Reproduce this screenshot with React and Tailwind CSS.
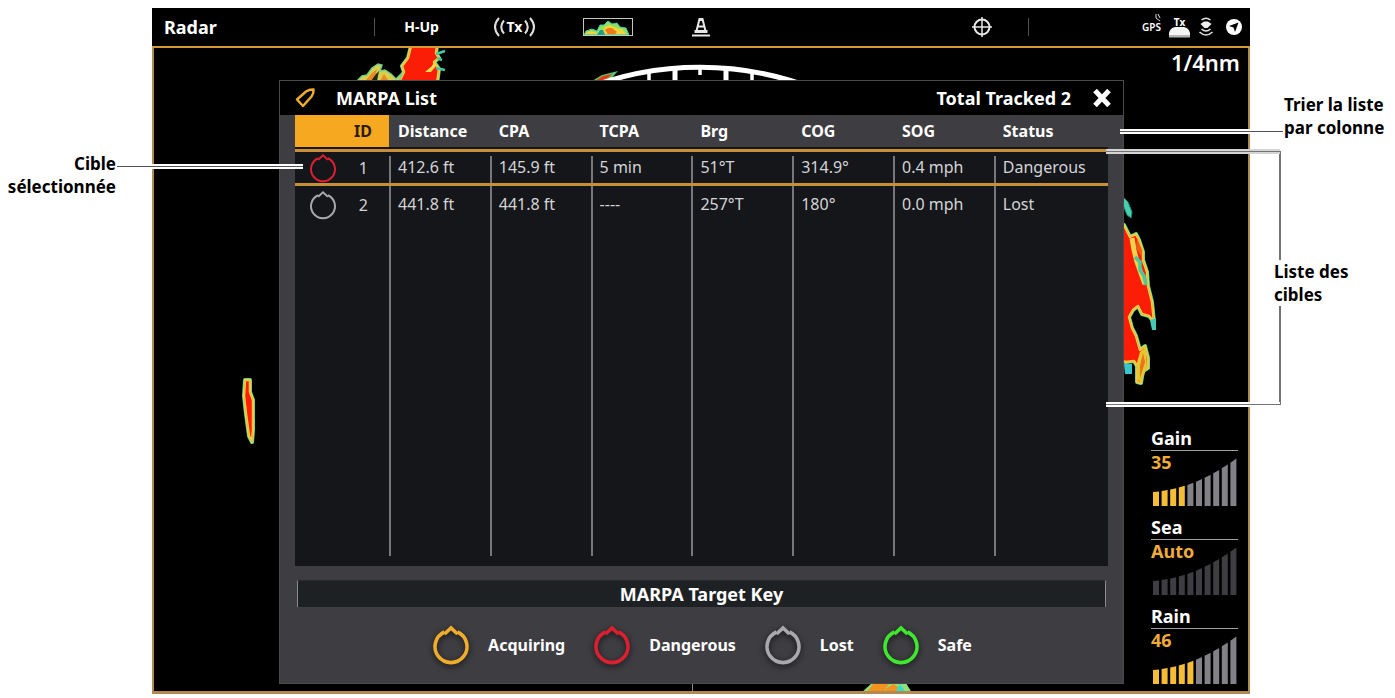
import React, { useState } from 'react';
import clsx from 'clsx';

const TARGETS = [
    { id: 1, status: 'Dangerous', distance: '412.6 ft', cpa: '145.9 ft', tcpa: '5 min', brg: '51°T', cog: '314.9°', sog: '0.4 mph' },
    { id: 2, status: 'Lost', distance: '441.8 ft', cpa: '441.8 ft', tcpa: '----', brg: '257°T', cog: '180°', sog: '0.0 mph' },
];

const COLUMNS = [
    { key: 'distance', label: 'Distance' },
    { key: 'cpa', label: 'CPA' },
    { key: 'tcpa', label: 'TCPA' },
    { key: 'brg', label: 'Brg' },
    { key: 'cog', label: 'COG' },
    { key: 'sog', label: 'SOG' },
    { key: 'status', label: 'Status' },
];

const KEY_ITEMS = ['Acquiring', 'Dangerous', 'Lost', 'Safe'];

const RING_COLORS = {
    Acquiring: '#f0ad2b',
    Dangerous: '#dc2030',
    Lost: '#a9a9ad',
    Safe: '#3fe82f',
};

const GAUGES = [
    { label: 'Gain', value: '35', lit: 4 },
    { label: 'Sea', value: 'Auto', lit: 0, auto: true },
    { label: 'Rain', value: '46', lit: 5 },
];

const TargetRing = ({ status, className, strokeWidth }) => (
    <svg viewBox="0 0 40 40" className={className} fill="none" stroke={RING_COLORS[status]} strokeWidth={strokeWidth} aria-hidden="true">
        <path d="M26.500 7A16 16 0 1 1 13.500 7" />
        <path d="M13.500 9L20 3L26.500 9" />
    </svg>
);

// Radar echoes: cold outer edge, hot core, warm rim between them
const Echo = ({ d }) => (
    <g strokeLinejoin="round">
        <path d={d} fill="#35c9b0" stroke="#4fcf9c" strokeWidth="4" />
        <path d={d} fill="#fb1d06" stroke="#f0dc4a" strokeWidth="2.500" />
        <path d={d} fill="none" stroke="#f0a030" strokeWidth="0.700" />
    </g>
);

const RadarScope = () => (
    <svg className="absolute inset-0 h-full w-full" viewBox="154 48 1094 643" preserveAspectRatio="xMidYMid slice" aria-hidden="true">
        <Echo d="M411 46L437 46L436 53L439 58L434 62L439 69L437 84L398 84L404 72L402 66L408 58Z" />
        <path d="M357 81L362 76L367 75L372 68L378 64L382 65L380 71L385 70L391 74L396 79L402 73L399 82Z" fill="#d8cf4a" stroke="#6fcf8e" strokeWidth="1.500" />
        <path d="M366 80L372 73L377 69L374 80ZM380 81L384 74L388 80Z" fill="#f0871f" />
        <path d="M371 81L376 74L379 71L377 81Z" fill="#1c2a1c" />
        <path d="M425 72L432 66L434 62L436 66L431 72Z" fill="#f0dc4a" />
        <path d="M436 54L445 51M437 58L442 60M436 68L445 70" stroke="#45c9a0" strokeWidth="2.500" />
        <path d="M592 81L602 75L618 71L609 81Z" fill="#62c16a" />
        <path d="M595 81L603 76L612 74L605 81Z" fill="#e03a12" />
        <path d="M580 91A316 316 0 0 1 820 91" fill="none" stroke="#fff" strokeWidth="5" />
        <path d="M649 72V84M700 66V75M752 72V84" stroke="#fff" strokeWidth="3.500" />
        <path d="M675 68V84M726 68V84" stroke="#fff" strokeWidth="5" />
        <path d="M1123 197L1128 202L1132 212L1131 218L1127 215L1123 205Z" fill="#45d0b0" stroke="#1e8a78" />
        <Echo d="M1118 223L1124 225L1130 237L1136 234L1139 240L1143 252L1143 260L1147 272L1148 286L1152 302L1154 322L1149 316L1142 314L1138 306L1133 310L1129 317L1132 328L1136 336L1140 350L1145 346L1148 358L1148 368L1143 371L1141 383L1137 382L1137 366L1134 361L1126 362L1118 360Z" />
        <path d="M1132 238L1134 250L1137 262L1142 276L1145 284" fill="none" stroke="#eed34a" strokeWidth="5" strokeLinejoin="round" />
        <path d="M1135 257L1140 262L1140 270L1144 276L1146 285" fill="none" stroke="#46c9a0" strokeWidth="3.500" />
        <path d="M1137 238L1142 250L1141 256L1136 248Z" fill="#ee5a16" />
        <path d="M1136 366L1140 352L1146 347L1147 368L1141 382L1138 380Z" fill="#e2c634" />
        <path d="M1140 366L1143 353L1145 362L1140 378Z" fill="#ea7418" />
        <path d="M1124 364H1132V374H1125Z" fill="#3cc4cc" />
        <path d="M1150 320L1156 318L1156 330H1152Z" fill="#45c9b8" />
        <Echo d="M245 380L250 380L250 392L253 400L253 416L253 430L252 442L249 436L246 414L244 396Z" />
        <path d="M692.500 680V693" stroke="#8a8a8a" />
        <path d="M861 693L872 683L906 683L912 693Z" fill="#8fe07c" />
        <path d="M866 693L874 683L890 683L884 690L893 684L900 688L896 693Z" fill="#f3921f" />
        <path d="M895 692L900 684L905 691Z" fill="#3fd8c2" />
    </svg>
);

const barHeight = (t) => 14 + 5 * t + 29 * t * t;

const GaugeBars = ({ lit, auto }) => (
    <svg viewBox="0 0 87 49" className="col-start-1 row-start-1 h-[49px] w-[87px]" aria-hidden="true">
        {Array.from({ length: 10 }, (_, i) => {
            const x = 2 + i * 8.6;
            const left = 49 - barHeight((x - 1) / 85);
            const right = 49 - barHeight((x + 5) / 85);
            const fill = i < lit ? '#f5bd35' : auto ? '#3d3d42' : '#828187';
            return <path key={i} d={`M${x} 49V${left}L${x + 6} ${right}V49Z`} fill={fill} />;
        })}
    </svg>
);

const Gauge = ({ label, value, lit, auto }) => (
    <button type="button" className="block w-[87px] text-left text-lg font-bold leading-6">
        <span className="block border-b border-neutral-400">{label}</span>
        <span className="grid pt-[6px]">
            <GaugeBars lit={lit} auto={auto} />
            <span className="col-start-1 row-start-1 -mt-[7px] text-[#f0ab3a]">{value}</span>
        </span>
    </button>
);

const TopBar = () => (
    <header className="flex h-[40px] items-center border-b-2 border-[#d19a35] text-white">
        <div className="flex h-full w-[223px] items-center pl-3">
            <h1 className="text-lg font-bold">Radar</h1>
            <span className="ml-auto h-[18px] w-px bg-neutral-600" />
        </div>
        <button type="button" className="w-[93px] text-sm font-bold">H-Up</button>
        <button type="button" className="flex w-[93px] items-center justify-center gap-px">
            <svg viewBox="0 0 13 20" className="h-5 w-[13px]" fill="none" stroke="#ddd" strokeWidth="2" aria-hidden="true">
                <path d="M6 1Q-2 10 6 19M11 3.500Q5.500 10 11 16.500" />
            </svg>
            <span className="text-sm font-bold">Tx</span>
            <svg viewBox="0 0 13 20" className="h-5 w-[13px]" fill="none" stroke="#ddd" strokeWidth="2" aria-hidden="true">
                <path d="M7 1Q15 10 7 19M2 3.500Q7.500 10 2 16.500" />
            </svg>
        </button>
        <button type="button" aria-label="Palette" className="flex w-[93px] justify-center">
            <svg viewBox="0 0 50 18" className="h-[18px] w-[50px]" aria-hidden="true">
                <path d="M1 17L3 13L9 11L14 13L17 7L21 7L25 3L29 6L34 5L37 9L43 10L46 17Z" fill="#8be066" stroke="#3fc7ae" />
                <path d="M2 16L6 13L12 14L15 16ZM21 9L27 7L33 10L39 11L43 16L20 16Z" fill="#efd43c" />
                <path d="M22 12L25 10L29 10L34 14L32 16H25Z" fill="#ee7a1c" />
                <path d="M14 17L17 12L20 12L22 17Z" fill="#1a9d93" />
                <rect x="0.500" y="0.500" width="49" height="17" fill="none" stroke="#c3c9b4" />
            </svg>
        </button>
        <button type="button" aria-label="Buoys" className="flex w-[93px] justify-center">
            <svg viewBox="0 0 18 20" className="h-5 w-[18px]" fill="none" stroke="#e8e8e8" aria-hidden="true">
                <path d="M0 18.500H18" strokeWidth="2" />
                <path d="M2.500 14.500H15.500" strokeWidth="3" />
                <path d="M4.500 14L7.500 2H10.500L13.500 14" strokeWidth="2" />
                <path d="M7 3H11M6 9.500H12" strokeWidth="2" />
            </svg>
        </button>
        <button type="button" aria-label="Cursor" className="ml-auto flex w-[92px] justify-center">
            <svg viewBox="0 0 20 20" className="h-5 w-5" fill="none" stroke="#e8e8e8" aria-hidden="true">
                <circle cx="10" cy="10" r="7.500" strokeWidth="2" />
                <path d="M10 0V20M0 10H20" strokeWidth="1.500" />
            </svg>
        </button>
        <span className="h-[18px] w-px bg-neutral-600" />
        <div className="flex w-[221px] items-center justify-end gap-2 pr-2">
            <span className="flex items-start text-[10px] font-semibold leading-5">
                GPS
                <svg viewBox="0 0 6 8" className="-ml-[6px] -mt-[3px] h-2 w-[6px]" fill="none" stroke="#ddd" aria-hidden="true">
                    <path d="M1 0L1 4L5 7M3 0L5 4" />
                </svg>
            </span>
            <span className="flex flex-col items-center text-[10px] font-bold leading-[10px]">
                Tx
                <svg viewBox="0 0 21 11" className="h-[11px] w-[21px]" aria-hidden="true">
                    <path d="M0 9V6Q1 1 6 0H15Q20 1 21 6V9Z" fill="#f4f4f4" />
                    <path d="M0 8H21V10.500H0Z" fill="#b5b5b5" />
                </svg>
            </span>
            <svg viewBox="0 0 16 20" className="h-5 w-4" fill="none" stroke="#e2e2e2" strokeWidth="1.500" aria-hidden="true">
                <path d="M3.500 3Q8 -0.500 12.500 3" />
                <path d="M2.500 7L6 4.500H10L13.500 7L9.500 11H6.500Z" fill="#f0f0f0" stroke="none" />
                <path d="M3.500 12Q8 16 12.500 12M1.500 15Q8 21 14.500 15" />
            </svg>
            <svg viewBox="0 0 16 16" className="ml-1 h-4 w-4" aria-hidden="true">
                <circle cx="8" cy="8" r="8" fill="#fff" />
                <path d="M12.500 3.500L9 13L7.500 8.500L3 7Z" fill="#000" />
            </svg>
        </div>
    </header>
);

const MarpaTable = () => {
    const [sortKey, setSortKey] = useState('id');
    const [selectedId, setSelectedId] = useState(1);
    const rows = [...TARGETS].sort((a, b) => (String(a[sortKey]) > String(b[sortKey]) ? 1 : -1));

    return (
        <div className="mx-[15px] bg-[#15161a] pb-[10px]">
            <table className="w-full table-fixed border-separate border-spacing-0 text-base text-[#d4d4d6]">
                <thead className="bg-[#3e3d42] text-white">
                    <tr>
                        <th className={clsx('h-[34px] w-[94px] border-b-2 border-[#15161a] p-0', sortKey === 'id' && 'bg-[#f5a820] text-[#2e1c08]')}>
                            <button type="button" onClick={() => setSortKey('id')} className="w-full pr-[17px] text-right font-bold">ID</button>
                        </th>
                        {COLUMNS.map((col) => (
                            <th key={col.key} className="w-[12.4%] border-b-2 border-[#15161a] p-0 last:w-auto">
                                <button type="button" onClick={() => setSortKey(col.key)} className="w-full pl-[9px] text-left font-bold">
                                    {col.label}
                                </button>
                            </th>
                        ))}
                    </tr>
                </thead>
                <tbody>
                    {rows.map((row) => {
                        const selected = row.id === selectedId;
                        const cell = clsx('h-[37px] p-0 align-bottom', selected && 'border-y-3 border-[#c98e38]');
                        return (
                            <tr key={row.id} onClick={() => setSelectedId(row.id)}>
                                <td className={cell}>
                                    <div className={clsx('flex items-center justify-between pl-[13px] pr-[21px]', selected ? 'h-[31px]' : 'h-[37px]')}>
                                        <TargetRing status={row.status} strokeWidth={2.6} className="h-[30px] w-[30px]" />
                                        {row.id}
                                    </div>
                                </td>
                                {COLUMNS.map((col) => (
                                    <td key={col.key} className={cell}>
                                        <div className={clsx('border-l-2 border-[#77777b] pl-[7px]', selected ? 'h-[27px] leading-[22px]' : 'h-[37px] leading-[37px]')}>
                                            {row[col.key]}
                                        </div>
                                    </td>
                                ))}
                            </tr>
                        );
                    })}
                    {/* empty space below the last target */}
                    <tr>
                        <td className="h-[333px] p-0" />
                        {COLUMNS.map((col) => (
                            <td key={col.key} className="border-l-2 border-[#77777b] p-0" />
                        ))}
                    </tr>
                </tbody>
            </table>
        </div>
    );
};

const MarpaDialog = () => (
    <section className="relative mt-8 min-w-0 flex-1 self-start border border-[#4a4a4e] bg-[#3e3d42] text-white">
        <div className="flex h-[34px] items-center bg-black px-[14px] text-lg font-bold">
            <svg viewBox="0 0 22 22" className="h-[22px] w-[22px]" fill="none" stroke="#f0ad2b" strokeWidth="2.500" strokeLinejoin="round" aria-hidden="true">
                <path d="M3 12.500L12 4.500Q16 2 19.500 2.500Q20 6 17.500 9.500L9 19Z" />
            </svg>
            <h2 className="ml-5">MARPA List</h2>
            <span className="ml-auto">Total Tracked 2</span>
            <button type="button" aria-label="Close" className="ml-[21px] mr-[-3px]">
                <svg viewBox="0 0 20 18" className="h-[18px] w-5" stroke="#fff" strokeWidth="5" aria-hidden="true">
                    <path d="M3 1.500L17 16.500M17 1.500L3 16.500" />
                </svg>
            </button>
        </div>
        <MarpaTable />
        <h3 className="mx-[17px] mt-[14px] border-x border-t border-x-[#8a8a8e] border-t-[#2a2b2e] bg-[#1e2124] text-center text-lg font-bold leading-[26px]">
            MARPA Target Key
        </h3>
        <ul className="flex h-[76px] items-center justify-center gap-[27px]">
            {KEY_ITEMS.map((item) => (
                <li key={item} className="flex items-center gap-[17px] text-base font-bold">
                    <TargetRing status={item} strokeWidth={3.6} className="h-10 w-10 drop-shadow-[0_2px_3px_rgba(0,0,0,0.7)]" />
                    {item}
                </li>
            ))}
        </ul>
    </section>
);

const RadarDisplay = () => (
    <div className="min-w-0 flex-1 bg-black">
        <TopBar />
        <div className="relative flex border-x-2 border-b-3 border-[#b08a50] pb-[7px]">
            <RadarScope />
            <div className="w-[125px] shrink-0" />
            <MarpaDialog />
            <aside className="relative flex w-[124px] flex-col items-end justify-between text-white">
                <p className="pr-2 text-[22px] font-semibold leading-7">1/4nm</p>
                <div className="flex flex-col gap-[9px] pr-[10px]">
                    {GAUGES.map((gauge) => (
                        <Gauge key={gauge.label} {...gauge} />
                    ))}
                </div>
            </aside>
        </div>
    </div>
);

const App = () => {
    return (
        <main className="flex min-h-screen items-start bg-white pt-2 font-['Noto_Sans',sans-serif] text-black">
            <div className="relative w-[152px] shrink-0 pr-9 pt-[144px] text-right text-[17px] font-bold leading-[23px]">
                <p>Cible<br />sélectionnée</p>
                <span className="absolute left-[117px] top-[156px] z-10 h-[5px] w-[186px] border-y-2 border-white bg-neutral-600" />
            </div>
            <RadarDisplay />
            <div className="relative w-[145px] shrink-0 pt-[85px] text-[17px] font-bold leading-[23px]">
                <span className="absolute right-28 top-[121px] z-10 h-[5px] w-[163px] border-y-2 border-white bg-neutral-600" />
                {/* bracket around the target list */}
                <span className="absolute right-[115px] top-[141px] z-10 h-[5px] w-[174px] border-y-2 border-neutral-300 bg-neutral-500 bg-clip-padding" />
                <span className="absolute right-[115px] top-[394px] z-10 h-[5px] w-[174px] border-y-2 border-white bg-neutral-500" />
                <span className="absolute right-[114px] top-[143px] h-[254px] w-[2px] bg-neutral-500" />
                <p className="pl-[34px]">Trier la liste<br />par colonne</p>
                <p className="relative ml-6 mt-[121px] bg-white">Liste des<br />cibles</p>
            </div>
        </main>
    );
};

export default App;
